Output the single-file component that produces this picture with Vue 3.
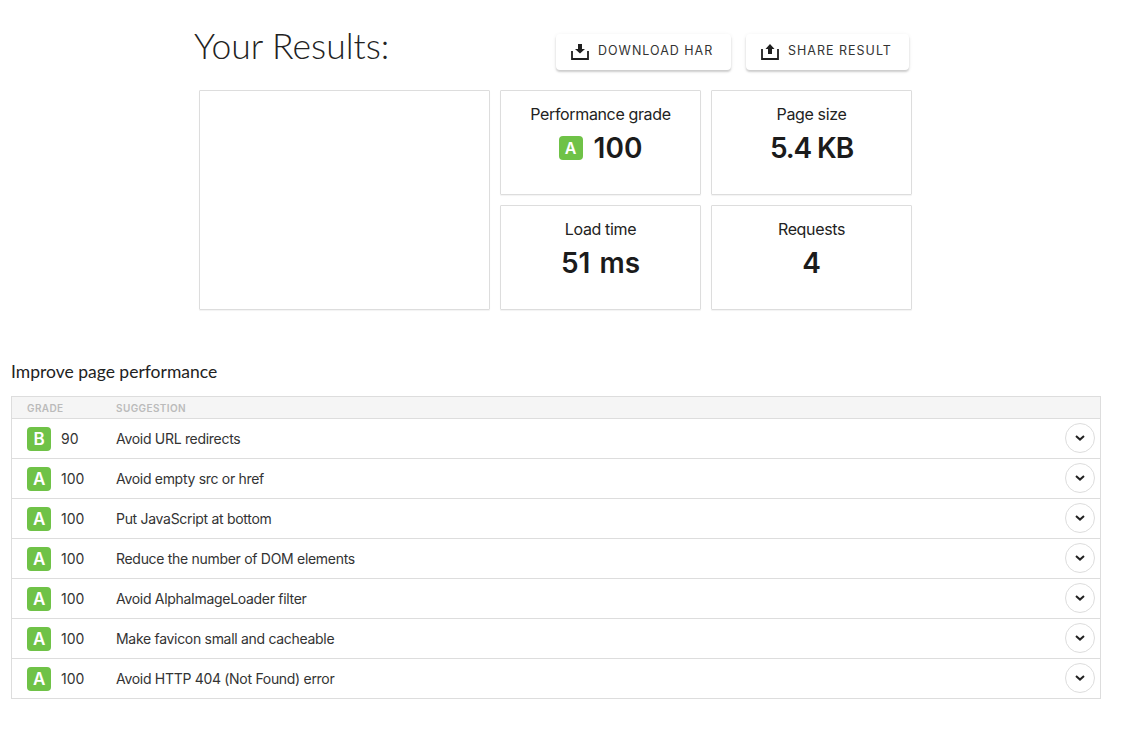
<script setup>
const rows = [
  { g: 'B', s: 90, t: 'Avoid URL redirects' },
  { g: 'A', s: 100, t: 'Avoid empty src or href' },
  { g: 'A', s: 100, t: 'Put JavaScript at bottom' },
  { g: 'A', s: 100, t: 'Reduce the number of DOM elements' },
  { g: 'A', s: 100, t: 'Avoid AlphaImageLoader filter' },
  { g: 'A', s: 100, t: 'Make favicon small and cacheable' },
  { g: 'A', s: 100, t: 'Avoid HTTP 404 (Not Found) error' },
]
</script>

<template>
  <div class="page">
    <section class="results">
      <header class="head">
        <h1>Your Results:</h1>
        <div class="actions">
          <button class="btn dl">
            <svg width="18" height="17" viewBox="0 0 18 17"><path d="M1 8v8h16V8" fill="none" stroke="#1f1f1f" stroke-width="1.8"/><path d="M7 1h4v5h3l-5 4.5L4 6h3z" fill="#1f1f1f"/></svg>
            <span>DOWNLOAD HAR</span>
          </button>
          <button class="btn sh">
            <svg width="18" height="17" viewBox="0 0 18 17"><path d="M1 6v10h16V6" fill="none" stroke="#1f1f1f" stroke-width="1.8"/><path d="M9 1l4.5 5H11v5H7V6H4.5z" fill="#1f1f1f"/></svg>
            <span>SHARE RESULT</span>
          </button>
        </div>
      </header>
      <div class="grid">
        <div class="card shot"></div>
        <div class="card">
          <div class="label">Performance grade</div>
          <div class="value"><span class="grade big">A</span>100</div>
        </div>
        <div class="card">
          <div class="label">Page size</div>
          <div class="value tight">5.4 KB</div>
        </div>
        <div class="card">
          <div class="label">Load time</div>
          <div class="value wide">51 ms</div>
        </div>
        <div class="card">
          <div class="label">Requests</div>
          <div class="value">4</div>
        </div>
      </div>
    </section>

    <h2>Improve page performance</h2>
    <div class="table">
      <div class="thead">
        <span class="c-grade">GRADE</span>
        <span>SUGGESTION</span>
      </div>
      <div v-for="r in rows" :key="r.t" class="row">
        <div class="c-grade">
          <span class="grade">{{ r.g }}</span>
          <span class="score">{{ r.s }}</span>
        </div>
        <div class="text">{{ r.t }}</div>
        <span class="toggle">
          <svg width="12" height="8" viewBox="0 0 12 8"><path d="M2 2l4 3.6L10 2" fill="none" stroke="#222" stroke-width="2"/></svg>
        </span>
      </div>
    </div>
  </div>
</template>

<style>
html, body { background: #fff; }
</style>

<style scoped>
.page {
  width: 1121px;
  height: 738px;
  box-sizing: border-box;
  padding: 23px 20px 0 11px;
  font-family: Inter, "Liberation Sans", sans-serif;
  color: #1f1f1f;
  overflow: hidden;
}
.results { margin-left: 183px; width: 718px; }
.head {
  display: flex;
  justify-content: space-between;
  height: 67px;
}
h1 {
  margin: 0;
  font: 300 35.5px/46px Lato, sans-serif;
  color: #222;
}
.actions { display: flex; gap: 15px; margin-top: 11px; margin-right: 3px; height: 36px; }
.btn {
  display: flex;
  align-items: center;
  gap: 9px;
  height: 36px;
  box-sizing: border-box;
  border: 0;
  border-radius: 4px;
  background: #fff;
  padding: 0 0 2px 15px;
  box-shadow: 0 2px 2px rgba(0,0,0,.16), 0 1px 4px rgba(0,0,0,.08);
  font: 400 12.5px/16px Inter, sans-serif;
  letter-spacing: 1px;
  color: #333;
  white-space: nowrap;
}
.dl { width: 175px; }
.sh { width: 163px; }
.grid {
  display: grid;
  grid-template-columns: 291px 201px 201px;
  grid-template-rows: 105px 105px;
  gap: 10px;
  margin-left: 5px;
}
.card {
  border: 1px solid #ddd;
  box-shadow: 0 1px 1px rgba(0,0,0,.05);
  border-radius: 1px;
  text-align: center;
  box-sizing: border-box;
  padding-top: 13px;
}
.shot { grid-row: span 2; }
.label { font-size: 16px; line-height: 20px; color: #222; letter-spacing: -0.36px; }
.value {
  margin-top: 6px;
  font-size: 28px;
  line-height: 36px;
  font-weight: 600;
  color: #1b1b1b;
  display: flex;
  justify-content: center;
  align-items: center;
}
.tight { letter-spacing: -1.1px; }
.wide { word-spacing: 2px; }
.grade {
  display: inline-flex;
  align-items: center;
  justify-content: center;
  width: 24px;
  height: 24px;
  border-radius: 4px;
  background: #6fc247;
  color: #fff;
  font-size: 17px;
  font-weight: 600;
  flex: none;
}
.grade.big { margin-right: 11px; font-size: 16px; }
h2 {
  margin: 50px 0 12px;
  font: 400 17.5px/24px Lato, sans-serif;
  color: #222;
}
.table { border: 1px solid #ddd; border-bottom: 0; width: 1090px; box-sizing: border-box; }
.thead {
  display: flex;
  align-items: center;
  height: 21px;
  background: #f5f5f5;
  font-size: 10px;
  font-weight: 600;
  letter-spacing: 0.4px;
  color: #bbb;
  border-bottom: 1px solid #ddd;
}
.c-grade { width: 104px; padding-left: 15px; box-sizing: border-box; display: flex; align-items: center; flex: none; }
.row {
  display: flex;
  align-items: center;
  height: 39px;
  border-bottom: 1px solid #ddd;
  font-size: 14px;
  letter-spacing: -0.3px;
  color: #333;
}
.score { margin-left: 10px; width: 30px; font-size: 14px; letter-spacing: 0; }
.text { flex: 1; }
.toggle {
  width: 28px;
  height: 28px;
  border: 1px solid #ddd;
  border-radius: 50%;
  display: flex;
  align-items: center;
  justify-content: center;
  margin-right: 5px;
  margin-top: -1px;
}
</style>
